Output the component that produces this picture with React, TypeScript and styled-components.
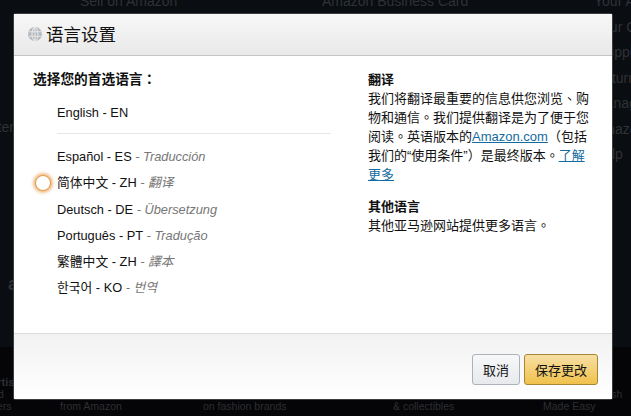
import { createGlobalStyle, styled } from 'styled-components';

const cjk = `'Noto Sans CJK SC', 'Liberation Sans', sans-serif`;
const cjkBody = `'Liberation Sans', 'Noto Sans CJK TC', sans-serif`;

const GlobalStyle = createGlobalStyle`
  html, body {
    margin: 0;
    height: 100%;
    background: #06080a;
  }
  * {
    box-sizing: border-box;
  }
`;

const Page = styled.div`
  position: relative;
  width: 631px;
  height: 416px;
  overflow: hidden;
  display: flex;
  flex-direction: column;
  background: #0a0d11;
  font-family: 'Liberation Sans', sans-serif;
`;

const BackdropMain = styled.div`
  height: 353px;
  flex: none;
  display: grid;
  grid-template-columns: 80px 242px 272px 37px;
  margin-top: -6px;
  font-size: 14px;
  line-height: 15px;
  white-space: nowrap;
  color: #2f3236;
`;

const LeftColumn = styled.div`
  margin-left: -28px;
  padding-top: 126px;
`;

const LeftLetter = styled.div`
  margin: 142px 0 0 36px;
  font-size: 18px;
  font-weight: 700;
`;

const RightColumn = styled.div`
  display: flex;
  flex-direction: column;
  gap: 10.5px;
`;

const BackdropFooter = styled.div`
  flex: 1;
  padding-top: 29px;
  display: grid;
  grid-template-columns: 60px 143px 190px 150px 55px 33px;
  font-size: 10.5px;
  line-height: 12px;
  white-space: nowrap;
  background: #050507;
  color: #2c2f33;
`;

const FooterColumn = styled.div<{ $offset?: number }>`
  margin-left: ${(p) => p.$offset ?? 0}px;
`;

const FooterTitle = styled.div`
  font-weight: 700;
  font-size: 11px;
`;

const Modal = styled.div`
  position: absolute;
  left: 14px;
  top: 14px;
  width: 598px;
  height: 385px;
  display: flex;
  flex-direction: column;
  background: #fff;
  border-radius: 2px;
  box-shadow: 0 0 0 1px #3a3d40;
`;

const Header = styled.div`
  height: 42px;
  flex: none;
  display: flex;
  align-items: center;
  gap: 4px;
  padding: 0 0 1px 14px;
  background: linear-gradient(#f7f7f7, #e9e9e9);
  border-bottom: 1px solid #c4c4c4;
`;

const Title = styled.h1`
  margin: 0;
  font: 400 17.5px/20px ${cjk};
  color: #111;
`;

const Body = styled.div`
  flex: 1;
  display: grid;
  grid-template-columns: 335px 1fr;
  padding: 14px 19px 0;
`;

const Heading = styled.h2`
  margin: 0;
  font: 700 13.7px/19px ${cjkBody};
  color: #111;
`;

const LanguageList = styled.div`
  padding: 11px 0 0 24px;
  width: 298px;
`;

const Language = styled.div`
  position: relative;
  height: 26.2px;
  display: flex;
  align-items: center;
  white-space: pre;
  font: 400 12.8px/18px 'Liberation Sans', ${cjk};
  color: #111;
`;

const Divider = styled.hr`
  margin: 7px 0 10px;
  border: 0;
  border-top: 1px solid #e7e7e7;
`;

const Translation = styled.i`
  color: #767676;
`;

const FocusRing = styled.span`
  position: absolute;
  left: -22px;
  top: 5px;
  width: 16px;
  height: 16px;
  border-radius: 50%;
  background: #fff;
  border: 1px solid #e09a45;
  box-shadow: 0 0 3px 2px rgba(228, 121, 17, 0.5);
`;

const Side = styled.div`
  width: 224px;
`;

const SideHeading = styled(Heading)`
  font-size: 13px;
`;

const Paragraph = styled.p`
  margin: 0 0 13px;
  font: 400 13px/19px ${cjkBody};
  color: #111;
`;

const Link = styled.a`
  color: #136c9f;
  text-decoration: underline;
`;

const Footer = styled.div`
  height: 66px;
  flex: none;
  display: flex;
  justify-content: flex-end;
  align-items: flex-start;
  gap: 4px;
  padding: 20px 14px 0 0;
  background: linear-gradient(#f2f2f2, #fff);
  border-top: 1px solid #dcdcdc;
`;

const Button = styled.button<{ $primary?: boolean }>`
  height: 31px;
  padding: 0 10px;
  font: 400 13px/16px ${cjk};
  color: #111;
  border-radius: 3px;
  border: 1px solid ${(p) => (p.$primary ? '#a88734' : '#adb1b8')};
  background: ${(p) =>
    p.$primary ? 'linear-gradient(#f7dfa5, #f0c14b)' : 'linear-gradient(#f7f8fa, #e7e9ec)'};
`;

const GlobeIcon = () => (
  <svg width="14" height="14" viewBox="0 0 14 14" fill="none" strokeWidth="1.1">
    <circle cx="7" cy="7" r="7" fill="#b5b9bd" />
    <ellipse cx="7" cy="7" rx="3" ry="6.4" stroke="#e6e8ea" />
    <path d="M.8 4.8h12.4M.8 9.2h12.4M7 .6v12.8" stroke="#e6e8ea" />
  </svg>
);

const languages = [
  { name: 'Español - ES', note: 'Traducción' },
  { name: '简体中文 - ZH', note: '翻译', focused: true },
  { name: 'Deutsch - DE', note: 'Übersetzung' },
  { name: 'Português - PT', note: 'Tradução' },
  { name: '繁體中文 - ZH', note: '譯本' },
  { name: '한국어 - KO', note: '번역' },
];

const accountLinks = [
  'Your Account',
  'Your Orders',
  'Shipping Rates',
  'Returns',
  'Manage',
  'Amazon',
  'Help',
];

export default function App() {
  return (
    <Page>
      <GlobalStyle />
      <BackdropMain>
        <LeftColumn>
          <div>Center</div>
          <LeftLetter>a</LeftLetter>
        </LeftColumn>
        <span>Sell on Amazon</span>
        <span>Amazon Business Card</span>
        <RightColumn>
          {accountLinks.map((link) => (
            <span key={link}>{link}</span>
          ))}
        </RightColumn>
      </BackdropMain>
      <BackdropFooter>
        <FooterColumn $offset={-75}>
          <FooterTitle>Amazon Advertising</FooterTitle>
          <div>Find, attract, and</div>
          <div>engage customers</div>
        </FooterColumn>
        <FooterColumn>
          <FooterTitle>&nbsp;</FooterTitle>
          <div>&nbsp;</div>
          <div>from Amazon</div>
        </FooterColumn>
        <FooterColumn>
          <FooterTitle>&nbsp;</FooterTitle>
          <div>&nbsp;</div>
          <div>on fashion brands</div>
        </FooterColumn>
        <FooterColumn>
          <FooterTitle>&nbsp;</FooterTitle>
          <div>&nbsp;</div>
          <div>&amp; collectibles</div>
        </FooterColumn>
        <FooterColumn>
          <FooterTitle>&nbsp;</FooterTitle>
          <div>&nbsp;</div>
          <div>Made Easy</div>
        </FooterColumn>
        <FooterColumn $offset={-10}>
          <FooterTitle>&nbsp;</FooterTitle>
          <div>Publish</div>
        </FooterColumn>
      </BackdropFooter>

      <Modal>
        <Header>
          <GlobeIcon />
          <Title>语言设置</Title>
        </Header>
        <Body>
          <div>
            <Heading>选择您的首选语言：</Heading>
            <LanguageList>
              <Language>English - EN</Language>
              <Divider />
              {languages.map((lang) => (
                <Language key={lang.name}>
                  {lang.focused && <FocusRing />}
                  {lang.name}
                  <Translation> - {lang.note}</Translation>
                </Language>
              ))}
            </LanguageList>
          </div>
          <Side>
            <SideHeading>翻译</SideHeading>
            <Paragraph>
              我们将翻译最重要的信息供您浏览、购物和通信。我们提供翻译是为了便于您阅读。英语版本的
              <Link href="#">Amazon.com</Link>（包括我们的“使用条件”）是最终版本。
              <Link href="#">了解更多</Link>
            </Paragraph>
            <SideHeading>其他语言</SideHeading>
            <Paragraph>其他亚马逊网站提供更多语言。</Paragraph>
          </Side>
        </Body>
        <Footer>
          <Button>取消</Button>
          <Button $primary>保存更改</Button>
        </Footer>
      </Modal>
    </Page>
  );
}
